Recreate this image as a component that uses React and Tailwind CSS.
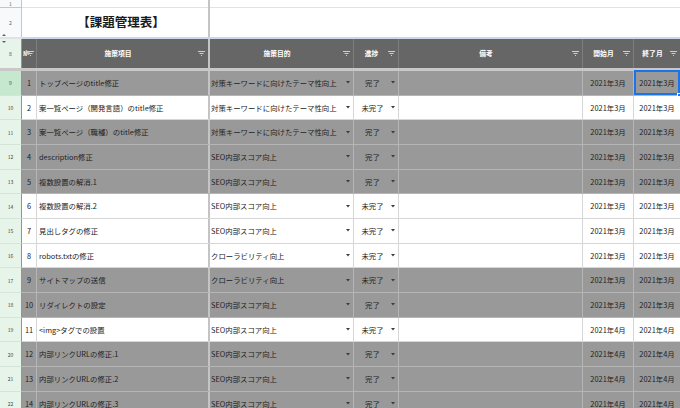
import React from 'react'

const rows = [
  { no: 1, item: 'トップページのtitle修正', goal: '対策キーワードに向けたテーマ性向上', status: '完了', done: true, m: '3' },
  { no: 2, item: '案一覧ページ（開発言語）のtitle修正', goal: '対策キーワードに向けたテーマ性向上', status: '未完了', done: false, m: '3' },
  { no: 3, item: '案一覧ページ（職種）のtitle修正', goal: '対策キーワードに向けたテーマ性向上', status: '完了', done: true, m: '3' },
  { no: 4, item: 'description修正', goal: 'SEO内部スコア向上', status: '完了', done: true, m: '3' },
  { no: 5, item: '複数設置の解消.1', goal: 'SEO内部スコア向上', status: '完了', done: true, m: '3' },
  { no: 6, item: '複数設置の解消.2', goal: 'SEO内部スコア向上', status: '未完了', done: false, m: '3' },
  { no: 7, item: '見出しタグの修正', goal: 'SEO内部スコア向上', status: '未完了', done: false, m: '3' },
  { no: 8, item: 'robots.txtの修正', goal: 'クローラビリティ向上', status: '未完了', done: false, m: '3' },
  { no: 9, item: 'サイトマップの送信', goal: 'クローラビリティ向上', status: '未完了', done: true, m: '3' },
  { no: 10, item: 'リダイレクトの設定', goal: 'SEO内部スコア向上', status: '完了', done: true, m: '3' },
  { no: 11, item: '<img>タグでの設置', goal: 'SEO内部スコア向上', status: '未完了', done: false, m: '4' },
  { no: 12, item: '内部リンクURLの修正.1', goal: 'SEO内部スコア向上', status: '完了', done: true, m: '4' },
  { no: 13, item: '内部リンクURLの修正.2', goal: 'SEO内部スコア向上', status: '完了', done: true, m: '4' },
  { no: 14, item: '内部リンクURLの修正.3', goal: 'SEO内部スコア向上', status: '完了', done: true, m: '4' },
]

function FilterIcon() {
  return (
    <svg width="7" height="5" viewBox="0 0 7 5" className="shrink-0">
      <path d="M0 0.5h7M1.5 2.5h4M3 4.5h1" stroke="#cfcfcf" strokeWidth="1" />
    </svg>
  )
}

function Caret() {
  return (
    <svg width="4" height="3" viewBox="0 0 4 3" className="shrink-0">
      <path d="M0 0h4L2 2.5z" fill="#3c3c3c" />
    </svg>
  )
}

function HeadCell({ w, label, last }) {
  return (
    <div className={`${w} shrink-0 h-full flex items-center relative ${last ? '' : 'border-r border-[#7d7d7d]'}`}>
      <div className="flex-1 text-center pr-[9px] text-white font-bold text-[6.8px] leading-none">{label}</div>
      <div className="absolute right-[3px] top-[12px]">
        <FilterIcon />
      </div>
    </div>
  )
}

export default function App() {
  return (
    <div className="w-[680px] h-[408px] overflow-hidden bg-white font-['Noto_Sans_CJK_JP',sans-serif] text-[#222]">
      {/* row 1 */}
      <div className="flex h-[8px]">
        <div className="w-[22px] shrink-0 bg-[#f8f9fa] border-r border-b border-[#c4c7c5] flex items-center justify-center text-[5px] text-[#5f6368] leading-none">1</div>
        <div className="w-[186px] shrink-0 border-b border-[#e2e2e2]" />
        <div className="w-[2px] shrink-0 bg-[#c4c4c4]" />
        <div className="flex-1 border-b border-[#e2e2e2]" />
      </div>
      {/* row 2 */}
      <div className="flex h-[29px]">
        <div className="w-[22px] shrink-0 bg-[#f8f9fa] border-r border-[#c4c7c5] flex items-center justify-center text-[5px] text-[#5f6368] leading-none relative">
          2
          <span className="absolute left-[2px] bottom-[1px] w-0 h-0 border-l-[2px] border-r-[2px] border-b-[2px] border-l-transparent border-r-transparent border-b-[#5f6368]" />
        </div>
        <div className="w-[186px] shrink-0 flex items-center justify-center pl-[12px] font-bold text-[12.5px] text-[#1a1a1a] leading-none">【課題管理表】</div>
        <div className="w-[2px] shrink-0 bg-[#c4c4c4]" />
        <div className="flex-1" />
      </div>
      {/* hidden rows marker */}
      <div className="flex h-[2px]">
        <div className="w-[22px] shrink-0 bg-[#dfe3e8]" />
        <div className="flex-1 bg-[#c9d7ec]" />
      </div>
      {/* header row 8 */}
      <div className="flex h-[29px]">
        <div className="w-[22px] shrink-0 bg-[#e6f4ea] border-r border-[#5cb870] flex items-center justify-center text-[5px] text-[#444] leading-none relative">
          8
          <span className="absolute left-[2px] top-[2px] w-0 h-0 border-l-[2px] border-r-[2px] border-t-[2px] border-l-transparent border-r-transparent border-t-[#5f6368]" />
        </div>
        <div className="flex flex-1 bg-[#666666] h-full">
          <div className="w-[15px] shrink-0 h-full flex items-center border-r border-[#7d7d7d] relative">
            <span className="pl-[1px] text-white font-bold text-[6px] leading-none">№</span>
            <div className="absolute right-[2px] top-[12px]">
              <FilterIcon />
            </div>
          </div>
          <HeadCell w="w-[171px]" label="施策項目" last />
          <div className="w-[2px] shrink-0 bg-[#c4c4c4]" />
          <HeadCell w="w-[144px]" label="施策目的" />
          <HeadCell w="w-[45px]" label="進捗" />
          <HeadCell w="w-[184px]" label="備考" />
          <HeadCell w="w-[51px]" label="開始月" />
          <HeadCell w="w-[46px]" label="終了月" last />
        </div>
      </div>
      {/* frozen divider */}
      <div className="h-[3px] bg-[#c8c8c8]" />
      {/* data */}
      {rows.map((r, i) => {
        const bg = r.done ? 'bg-[#999999]' : 'bg-white'
        const line = r.done ? 'border-[#b5b5b5]' : 'border-[#d6d6d6]'
        return (
          <div key={r.no} className="flex h-[24.67px] text-[7.4px] leading-none">
            <div className={`w-[22px] shrink-0 border-r border-b border-r-[#5cb870] border-b-[#d3e6d8] flex items-center justify-center text-[5px] text-[#444] ${i === 0 ? 'bg-[#c6e8cf]' : 'bg-[#e6f4ea]'}`}>
              {i + 9}
            </div>
            <div className={`flex flex-1 ${bg} border-b ${line}`}>
              <div className={`w-[15px] shrink-0 border-r ${line} flex items-center justify-center`}>{r.no}</div>
              <div className="w-[171px] shrink-0 flex items-center pl-[2px] whitespace-nowrap overflow-hidden">{r.item}</div>
              <div className="w-[2px] shrink-0 bg-[#c4c4c4]" />
              <div className={`w-[144px] shrink-0 border-r ${line} flex items-center pl-[1px] pr-[3px] whitespace-nowrap`}>
                <span className="flex-1">{r.goal}</span>
                <Caret />
              </div>
              <div className={`w-[45px] shrink-0 border-r ${line} flex items-center pr-[3px]`}>
                <span className="flex-1 text-center">{r.status}</span>
                <Caret />
              </div>
              <div className={`w-[184px] shrink-0 border-r ${line}`} />
              <div className={`w-[51px] shrink-0 border-r ${line} flex items-center justify-center whitespace-nowrap`}>2021年{r.m}月</div>
              <div className="w-[46px] shrink-0 flex items-center justify-center whitespace-nowrap relative">
                2021年{r.m}月
                {i === 0 && (
                  <>
                    <div className="absolute inset-0 -top-[1px] border-2 border-[#1a73e8]" />
                    <div className="absolute -right-[1px] -bottom-[2px] w-[4px] h-[4px] bg-[#1a73e8] border border-white" />
                  </>
                )}
              </div>
            </div>
          </div>
        )
      })}
    </div>
  )
}
